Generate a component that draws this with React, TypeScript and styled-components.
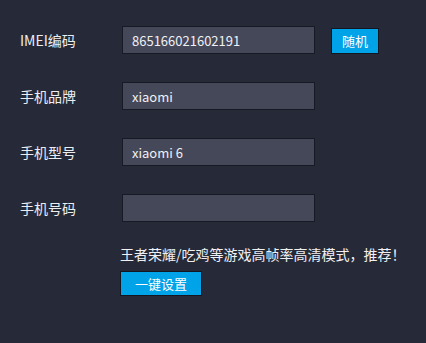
import styled, { createGlobalStyle } from 'styled-components'

const GlobalStyle = createGlobalStyle`
	html, body {
		margin: 0;
		padding: 0;
		background-color: #262a38;
	}
	body {
		font-family: 'Noto Sans CJK SC', 'Noto Sans', sans-serif;
	}
`

const fields = [
	{ label: 'IMEI编码', value: '865166021602191', random: true },
	{ label: '手机品牌', value: 'xiaomi' },
	{ label: '手机型号', value: 'xiaomi 6' },
	{ label: '手机号码', value: '' },
]

export default function App() {
	return (
		<Page>
			<GlobalStyle />
			<Form>
				{fields.map((f) => (
					<Row key={f.label}>
						<Label>{f.label}</Label>
						<Input defaultValue={f.value} />
						{f.random && <SmallButton>随机</SmallButton>}
					</Row>
				))}
			</Form>
			<Notice>
				<NoticeText>王者荣耀/吃鸡等游戏高帧率高清模式，推荐！</NoticeText>
				<WideButton>一键设置</WideButton>
			</Notice>
		</Page>
	)
}

const Page = styled.div`
	width: 426px;
	height: 343px;
	box-sizing: border-box;
	padding: 26px 0 0 20px;
	background-color: #262a38;
	color: #ecedf0;
`

const Form = styled.div`
	display: flex;
	flex-direction: column;
	gap: 28px;
`

const Row = styled.div`
	display: flex;
	align-items: center;
	height: 28px;
`

const Label = styled.span`
	width: 102px;
	font-size: 14px;
	color: #eceef2;
`

const Input = styled.input`
	box-sizing: border-box;
	width: 193px;
	height: 28px;
	padding: 0 9px;
	border: 1px solid #171a24;
	background-color: #454859;
	color: #f0f0f4;
	font-family: inherit;
	font-size: 13px;
	outline: none;
`

const Button = styled.button`
	box-sizing: border-box;
	padding: 0;
	border: 1px solid #141722;
	background-color: #00a2e8;
	color: #ffffff;
	font-family: inherit;
	font-size: 13px;
	cursor: pointer;
`

const SmallButton = styled(Button)`
	width: 48px;
	height: 26px;
	margin-left: 16px;
	margin-top: 1px;
`

const Notice = styled.div`
	display: flex;
	flex-direction: column;
	align-items: flex-start;
	gap: 8px;
	margin: 23px 0 0 100px;
`

const NoticeText = styled.div`
	font-size: 14px;
	line-height: 18px;
	color: #f0f0f4;
`

const WideButton = styled(Button)`
	width: 82px;
	height: 25px;
`
